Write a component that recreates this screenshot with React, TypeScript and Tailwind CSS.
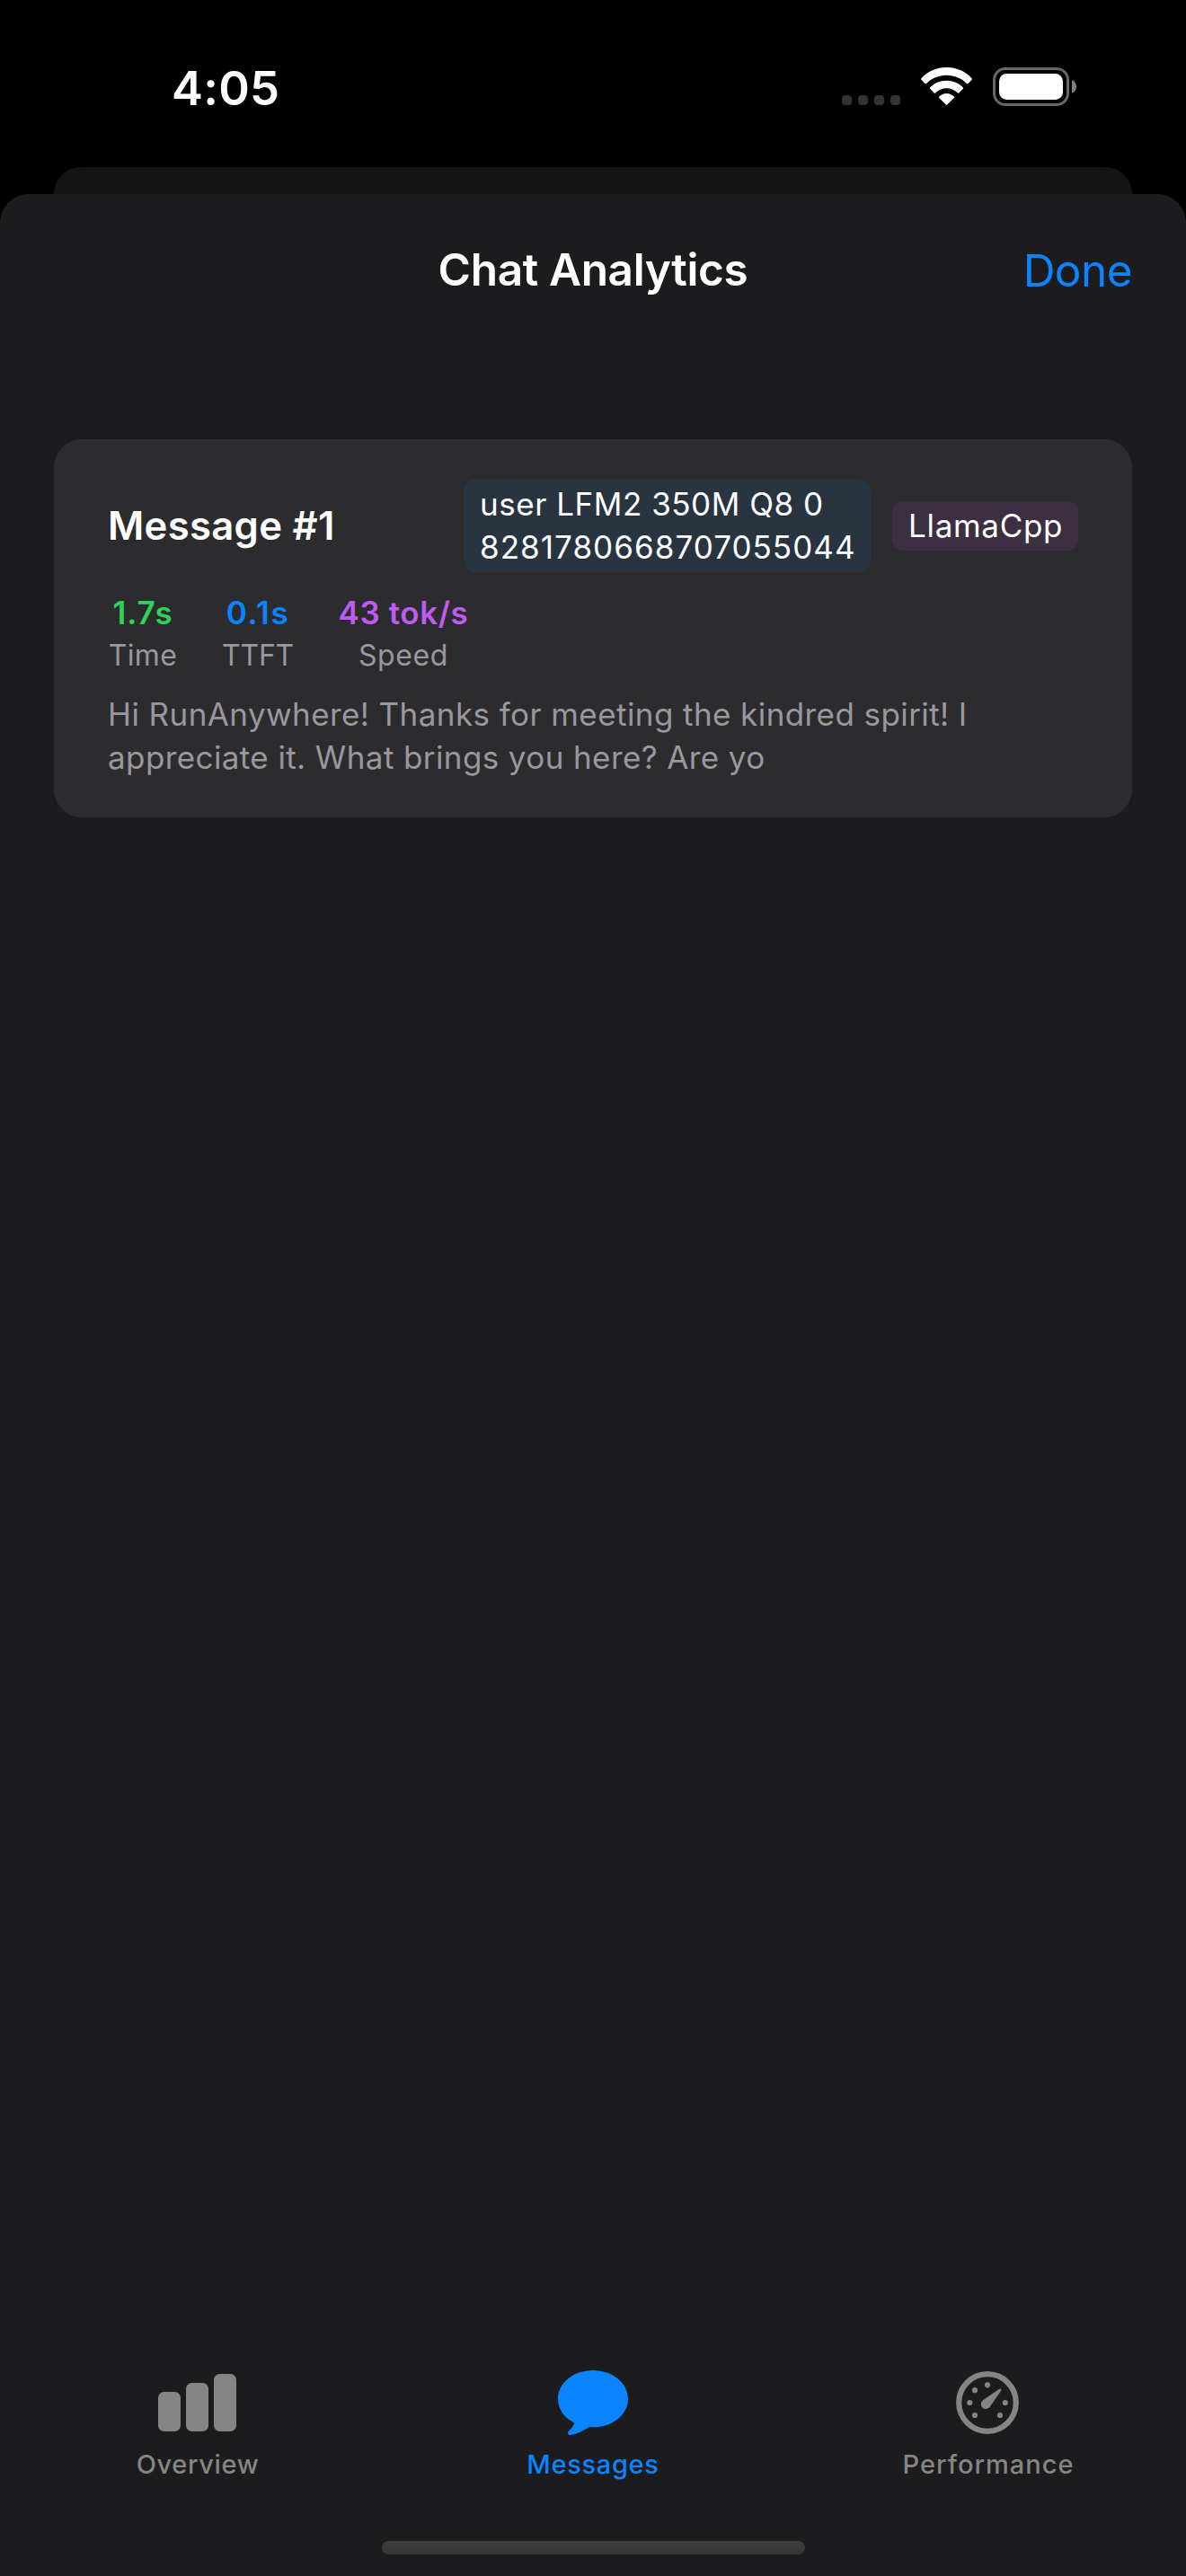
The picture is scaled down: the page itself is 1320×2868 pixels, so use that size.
import type { ReactNode } from 'react';

function StatusBar() {
  return (
    <div className="flex h-[186px] items-start justify-between pt-[75px] pr-[122px] pl-[191px]">
      <div className="text-[52.5px] leading-[46px] font-semibold tracking-[0.22px]">4:05</div>
      <div className="flex h-[43px] items-end">
        <div className="mb-px flex gap-[7px]">
          {[0, 1, 2, 3].map((i) => (
            <div key={i} className="size-[11px] rounded-[4px] bg-[#333333]" />
          ))}
        </div>
        <svg className="mr-[23px] mb-px ml-[23px] h-[42px] w-[57px]" viewBox="0 0 57 42" fill="white">
          <path d="M28.5 0C39.9 0 50 4.7 56.6 12.3Q57.3 13.1 56.5 13.9L52.4 18Q51.6 18.7 50.9 18C45.2 12.3 37.3 8.8 28.5 8.8S11.8 12.3 6.1 18Q5.4 18.7 4.6 18L0.5 13.9Q-0.3 13.1 0.4 12.3C7 4.7 17.1 0 28.5 0Z" />
          <path d="M28.5 14.8C35.7 14.8 42.2 17.6 46.9 22.4Q47.6 23.1 46.9 23.8L42.3 28.4Q41.6 29 40.9 28.4C37.6 25.2 33.2 23.2 28.5 23.2S19.4 25.2 16.1 28.4Q15.4 29 14.7 28.4L10.1 23.8Q9.4 23.1 10.1 22.4C14.8 17.6 21.3 14.8 28.5 14.8Z" />
          <path d="M28.5 29C31.6 29 34.4 30.4 36.7 32.6Q37.5 33.3 36.8 34.1L29.2 41.6Q28.5 42.2 27.8 41.6L20.2 34.1Q19.5 33.3 20.3 32.6C22.6 30.4 25.4 29 28.5 29Z" />
        </svg>
        <svg className="h-[43px] w-[93px]" viewBox="0 0 93 43">
          <rect x="1.5" y="1.5" width="82" height="40" rx="12.5" fill="none" stroke="#666666" strokeWidth="3" />
          <rect x="7" y="7" width="71" height="29" rx="8.5" fill="white" />
          <path d="M88 14.2C91 15.3 93 18 93 21.5S91 27.7 88 28.8Z" fill="#7f7f7f" />
        </svg>
      </div>
    </div>
  );
}

type StatProps = { value: string; label: string; className: string; valueClass: string; labelClass: string };

function Stat({ value, label, className, valueClass, labelClass }: StatProps) {
  return (
    <div className={`flex flex-col items-center whitespace-nowrap ${className}`}>
      <div className={`text-[35px] leading-[48px] font-semibold ${valueClass}`}>{value}</div>
      <div className={`mt-[3px] text-[32px] leading-[41px] text-[#98989e] ${labelClass}`}>{label}</div>
    </div>
  );
}

function MessageCard() {
  return (
    <div className="mx-[60px] flex h-[421px] flex-col rounded-[31px] bg-[#2c2c2e] px-[60px] pt-[45px]">
      <div className="flex items-center">
        <div className="flex-1 text-[43.7px] leading-[60px] font-semibold tracking-[0.28px] whitespace-nowrap">Message #1</div>
        <div className="h-[103px] w-[453px] rounded-[12px] bg-[#293441] pt-[3px] pl-[18px] text-[35px] leading-[48px] whitespace-nowrap">
          <div className="tracking-[0.53px]">user LFM2 350M Q8 0</div>
          <div className="tracking-[1.04px]">8281780668707055044</div>
        </div>
        <div className="ml-[24px] h-[55px] w-[207px] rounded-[12px] bg-[#3b2f41] pl-[18px] text-[35px] leading-[55px] tracking-[0.68px] whitespace-nowrap">
          LlamaCpp
        </div>
      </div>
      <div className="mt-[21px] flex gap-[48px]">
        <Stat value="1.7s" label="Time" className="w-[78px]" valueClass="text-[#30d158] tracking-[1px]" labelClass="tracking-[0.3px]" />
        <Stat value="0.1s" label="TTFT" className="w-[82px]" valueClass="text-[#0a84ff] tracking-[1.6px]" labelClass="tracking-[-0.2px]" />
        <Stat value="43 tok/s" label="Speed" className="w-[146px]" valueClass="text-[#bf5af2] tracking-[0.58px]" labelClass="tracking-[0.64px]" />
      </div>
      <div className="mt-[21px] text-[35px] leading-[48px] whitespace-nowrap text-[#98989e]">
        <div className="tracking-[0.42px]">Hi RunAnywhere! Thanks for meeting the kindred spirit! I</div>
        <div className="tracking-[0.4px]">appreciate it. What brings you here? Are yo</div>
      </div>
    </div>
  );
}

function Tab({ label, className, children }: { label: string; className: string; children: ReactNode }) {
  return (
    <div className={`flex flex-1 flex-col items-center ${className}`}>
      <div className="flex h-[80px] items-center justify-center">{children}</div>
      <div className="mt-[9px] text-[29px] leading-[40px] font-medium">{label}</div>
    </div>
  );
}

export default function App() {
  return (
    <div className="flex h-[2868px] w-[1320px] flex-col bg-black font-['Inter',sans-serif] text-white">
      <StatusBar />
      <div className="mx-[60px] h-[30px] rounded-t-[30px] bg-[#141414]" />
      <div className="flex flex-1 flex-col rounded-t-[32px] bg-[#1c1c1e]">
        <div className="grid h-[168px] grid-cols-[1fr_auto_1fr] items-center px-[60px]">
          <div />
          <div className="text-[49.5px] leading-[60px] font-semibold tracking-[-0.34px]">Chat Analytics</div>
          <div className="mt-[2px] text-right text-[49.5px] leading-[60px] tracking-[-0.55px] text-[#0a84ff]">Done</div>
        </div>
        <div className="h-[105px]" />
        <MessageCard />
        <div className="flex-1" />
        <div className="flex h-[194px]">
          <Tab label="Overview" className="text-[#858585] tracking-[0.63px]">
            <svg className="mr-px h-[64px] w-[87px]" viewBox="0 0 87 64" fill="currentColor">
              <rect x="0" y="20" width="25" height="44" rx="6.5" />
              <rect x="31" y="10" width="25" height="54" rx="6.5" />
              <rect x="62" y="0" width="25" height="64" rx="6.5" />
            </svg>
          </Tab>
          <Tab label="Messages" className="text-[#0a84ff] tracking-[0.68px]">
            <svg className="h-[72px] w-[78px]" viewBox="0 0 234 216" preserveAspectRatio="none" fill="currentColor">
              <path d="M117 0C182 0 234 42 234 95C234 148 182 190 117 190L104 189C88 200 64 214 41 216C34 217 30 210 35 204C41 197 49 190 54 179C55 177 54 175 52 174C20 157 0 128 0 95C0 42 52 0 117 0Z" />
            </svg>
          </Tab>
          <Tab label="Performance" className="text-[#858585] tracking-[1.01px]">
            <svg className="mr-[2px] h-[70px] w-[70px]" viewBox="-35 -35 70 70" fill="currentColor">
              <circle r="31.8" fill="none" stroke="currentColor" strokeWidth="6.2" />
              <circle cx="0" cy="-19.7" r="3.1" />
              <circle cx="-14" cy="-13.8" r="3.1" />
              <circle cx="-19.7" cy="0" r="3.1" />
              <circle cx="-14" cy="14" r="3.1" />
              <circle cx="14" cy="14" r="3.1" />
              <circle cx="19.8" cy="0" r="3.1" />
              <path d="M13.2 -15.2C14.8 -16.2 16.2 -14.8 15.2 -13.2L3 4.3C0.8 7.4 -3.2 7.8 -5.6 5.4S-7.6 -0.8 -4.7 -3Z" />
            </svg>
          </Tab>
        </div>
        <div className="mb-[24px] h-[15px] w-[471px] self-center rounded-full bg-linear-to-b from-[#3d3d3d] to-[#363636]" />
      </div>
    </div>
  );
}
